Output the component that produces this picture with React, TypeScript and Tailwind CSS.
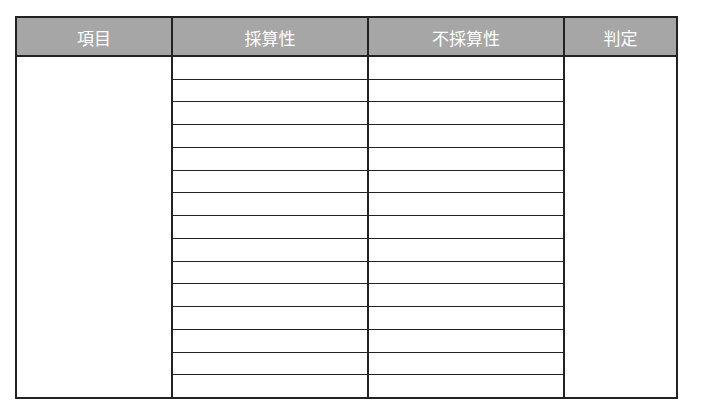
import React from 'react';

const rows = Array.from({ length: 15 }, (_, i) => i);

const headers = ['項目', '採算性', '不採算性', '判定'];

const StackedCells = ({ first }: { first?: boolean }) => (
  <div className={`flex flex-col border-l-2 border-[#222] ${first ? '' : ''}`}>
    {rows.map((r) => (
      <div
        key={r}
        className={`flex-1 ${r < rows.length - 1 ? 'border-b-[1.5px] border-[#222]' : ''}`}
      />
    ))}
  </div>
);

const App = () => {
  return (
    <div className="w-[702px] h-[419px] bg-white pl-[15px] pt-[16px]">
      <div
        className="w-[663px] h-[383px] border-2 border-[#222] flex flex-col"
        style={{ fontFamily: '"Noto Sans CJK JP", "Noto Sans", sans-serif' }}
      >
        {/* header */}
        <div className="grid grid-cols-[154px_196px_196px_113px] h-[39px] bg-[#a6a6a6] border-b-2 border-[#222]">
          {headers.map((h, i) => (
            <div
              key={h}
              className={`flex items-center justify-center pt-[2px] text-white text-[17px] ${i > 0 ? 'border-l-2 border-[#222]' : ''}`}
            >
              {h}
            </div>
          ))}
        </div>

        {/* body */}
        <div className="grid grid-cols-[154px_196px_196px_113px] flex-1">
          <div />
          <StackedCells />
          <StackedCells />
          <div className="border-l-2 border-[#222]" />
        </div>
      </div>
    </div>
  );
};

export default App;
